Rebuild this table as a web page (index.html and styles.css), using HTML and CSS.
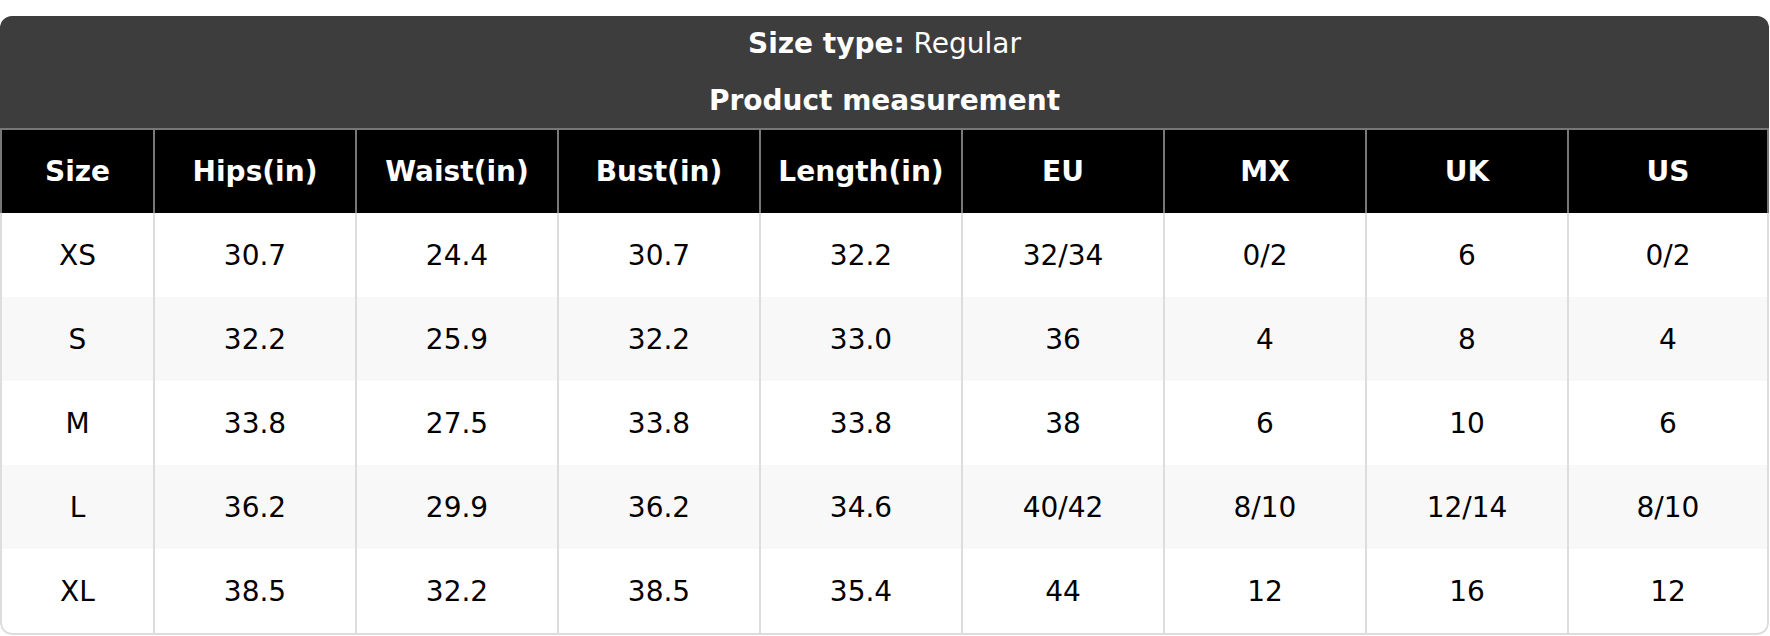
FILE: index.html
```html
<!DOCTYPE html>
<html lang="en">
<head>
<meta charset="utf-8">
<title>Size chart</title>
<link rel="stylesheet" href="styles.css">
</head>
<body>
<div class="chart">
  <div class="chart-head">
    <div class="chart-line"><strong>Size type:</strong>&nbsp;Regular</div>
    <div class="chart-line"><strong>Product measurement</strong></div>
  </div>
  <table class="size-table">
    <colgroup>
      <col class="col-size">
      <col><col><col><col><col><col><col><col>
    </colgroup>
    <thead>
      <tr>
        <th>Size</th><th>Hips(in)</th><th>Waist(in)</th><th>Bust(in)</th><th>Length(in)</th><th>EU</th><th>MX</th><th>UK</th><th>US</th>
      </tr>
    </thead>
    <tbody>
      <tr><td>XS</td><td>30.7</td><td>24.4</td><td>30.7</td><td>32.2</td><td>32/34</td><td>0/2</td><td>6</td><td>0/2</td></tr>
      <tr class="alt"><td>S</td><td>32.2</td><td>25.9</td><td>32.2</td><td>33.0</td><td>36</td><td>4</td><td>8</td><td>4</td></tr>
      <tr><td>M</td><td>33.8</td><td>27.5</td><td>33.8</td><td>33.8</td><td>38</td><td>6</td><td>10</td><td>6</td></tr>
      <tr class="alt"><td>L</td><td>36.2</td><td>29.9</td><td>36.2</td><td>34.6</td><td>40/42</td><td>8/10</td><td>12/14</td><td>8/10</td></tr>
      <tr><td>XL</td><td>38.5</td><td>32.2</td><td>38.5</td><td>35.4</td><td>44</td><td>12</td><td>16</td><td>12</td></tr>
    </tbody>
  </table>
</div>
</body>
</html>
```
FILE: styles.css
```css
html, body {
  margin: 0;
  padding: 0;
  background: #ffffff;
}

body {
  font-family: "DejaVu Sans", "Liberation Sans", sans-serif;
  font-size: 28px;
  color: #000;
}

.chart {
  margin-top: 16px;
  width: 1769px;
  border-radius: 12px;
  overflow: hidden;
}

.chart-head {
  background: #3d3d3d;
  color: #fff;
  border-bottom: 2px solid #777777;
}

.chart-line {
  height: 56px;
  display: flex;
  align-items: center;
  justify-content: center;
}

.chart-line:first-child {
  padding-bottom: 1px;
  height: 55px;
}

.chart-line strong {
  font-weight: bold;
}

.size-table {
  width: 1769px;
  table-layout: fixed;
  border-collapse: separate;
  border-spacing: 0;
}

.col-size {
  width: 153px;
}

.size-table th,
.size-table td {
  padding: 0;
  text-align: center;
  vertical-align: middle;
  border-left: 2px solid #dddddd;
}

.size-table th {
  height: 83px;
  background: #000;
  color: #fff;
  font-weight: bold;
  border-left-color: #777777;
}

.size-table td {
  height: 84px;
  font-weight: normal;
}

.size-table th:last-child {
  border-right: 2px solid #777777;
}

.size-table td:last-child {
  border-right: 2px solid #dddddd;
}

.size-table tr.alt td {
  background: #f8f8f8;
}

.size-table tbody tr:last-child td {
  border-bottom: 2px solid #dddddd;
}

.size-table tbody tr:last-child td:first-child {
  border-bottom-left-radius: 12px;
}

.size-table tbody tr:last-child td:last-child {
  border-bottom-right-radius: 12px;
}
```
